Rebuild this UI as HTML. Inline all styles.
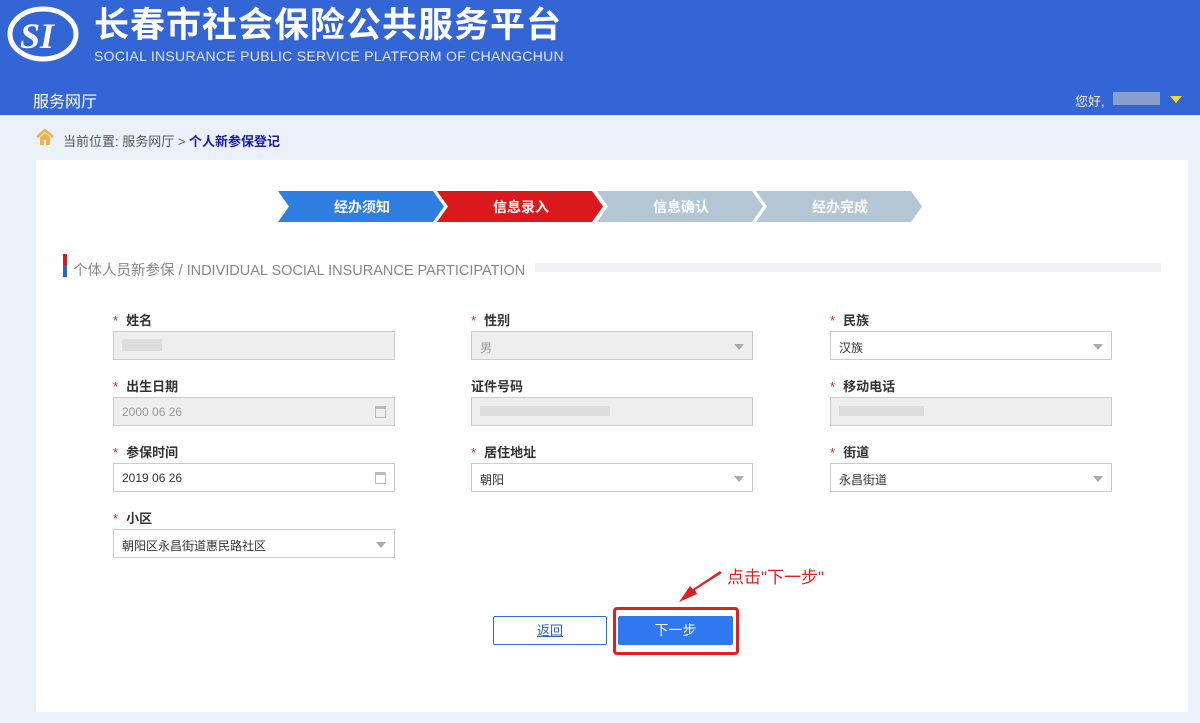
<!DOCTYPE html>
<html><head><meta charset="utf-8"><style>
*{margin:0;padding:0;box-sizing:border-box}
body{width:1200px;height:723px;background:#eaf1f9;font-family:"Liberation Sans","Noto Sans CJK SC",sans-serif;position:relative;overflow:hidden}
.abs{position:absolute}
.hdr{left:0;top:0;width:1200px;height:115px;background:#3366d4}
.lbl{position:absolute;font-size:13px;font-weight:bold;color:#333}
.lbl b{color:#e02020;margin-right:8px;font-weight:normal}
.inp{position:absolute;width:282px;height:29px;border:1px solid #ccc;background:#fff;font-size:12px;color:#333;padding:7px 8px}
.dis{background:#eeeeee;color:#999}
.arr{position:absolute;right:8px;top:12px;border-left:5px solid transparent;border-right:5px solid transparent;border-top:6px solid #aaa}
.cal{position:absolute;right:8px;top:8px;width:11px;height:12px;border:1px solid #bbb;border-top:3px solid #bbb}
</style></head><body>
<div class="abs hdr"></div>
<svg class="abs" style="left:6px;top:4px" width="74" height="60" viewBox="0 0 74 60"><ellipse cx="37" cy="30" rx="33" ry="25" fill="none" stroke="#fff" stroke-width="5"/><text x="14" y="44" font-size="36" font-weight="bold" font-style="italic" fill="#fff" font-family="Liberation Serif">SI</text></svg>
<div class="abs" style="left:94px;top:5px;font-size:35px;line-height:42px;color:#fff;letter-spacing:1px;font-weight:bold">长春市社会保险公共服务平台</div>
<div class="abs" style="left:94px;top:48px;font-size:14px;color:#dfe6f5;letter-spacing:0.3px">SOCIAL INSURANCE PUBLIC SERVICE PLATFORM OF CHANGCHUN</div>
<div class="abs" style="left:33px;top:88px;font-size:16px;color:#fff">服务网厅</div>
<div class="abs" style="left:1075px;top:91px;font-size:13px;color:#f3f0c0">您好,</div>
<div class="abs" style="left:1113px;top:92px;width:47px;height:13px;background:#8a9fd0"></div>
<div class="abs" style="left:1170px;top:96px;border-left:6px solid transparent;border-right:6px solid transparent;border-top:7px solid #f5d630"></div>
<svg class="abs" style="left:36px;top:129px" width="18" height="16" viewBox="0 0 18 16"><path d="M1 8L9 1l8 7" fill="none" stroke="#f0b24a" stroke-width="2.5"/><path d="M4 8v8h4v-5h2v5h4V8L9 4z" fill="#f0b24a"/></svg>
<div class="abs" style="left:63px;top:131px;font-size:13px;color:#555">当前位置: 服务网厅 &gt; <span style="color:#1a1aa8;font-weight:bold">个人新参保登记</span></div>
<div class="abs" style="left:36px;top:160px;width:1152px;height:552px;background:#fff"></div>
<svg class="abs" style="left:276px;top:190px" width="650" height="33">
<polygon points="2,1 157,1 168,16.5 157,32 2,32 13,16.5" fill="#2f7fe0"/>
<polygon points="161,1 316,1 327,16.5 316,32 161,32 172,16.5" fill="#d9191c"/>
<polygon points="321,1 476,1 487,16.5 476,32 321,32 332,16.5" fill="#b4c6d4"/>
<polygon points="480,1 635,1 646,16.5 635,32 480,32 491,16.5" fill="#b4c6d4"/>
<g font-size="14" font-weight="bold" fill="#fff" font-family="Liberation Sans,Noto Sans CJK SC,sans-serif" text-anchor="middle">
<text x="86" y="22">经办须知</text><text x="245" y="22">信息录入</text><text x="405" y="22">信息确认</text><text x="564" y="22">经办完成</text></g></svg>
<div class="abs" style="left:63px;top:254px;width:4px;height:11px;background:#d9191c"></div>
<div class="abs" style="left:63px;top:265px;width:4px;height:12px;background:#2f5fd0"></div>
<div class="abs" style="left:73px;top:259px;font-size:14.5px;color:#888">个体人员新参保 / INDIVIDUAL SOCIAL INSURANCE PARTICIPATION</div>
<div class="abs" style="left:535px;top:263px;width:626px;height:9px;background:#eef1f5"></div>

<div class="lbl" style="left:113px;top:310px"><b>*</b>姓名</div>
<div class="inp dis" style="left:113px;top:331px"><span style="display:inline-block;width:40px;height:12px;background:#ddd"></span></div>
<div class="lbl" style="left:471px;top:310px"><b>*</b>性别</div>
<div class="inp dis" style="left:471px;top:331px">男<i class="arr"></i></div>
<div class="lbl" style="left:830px;top:310px"><b>*</b>民族</div>
<div class="inp" style="left:830px;top:331px">汉族<i class="arr"></i></div>

<div class="lbl" style="left:113px;top:376px"><b>*</b>出生日期</div>
<div class="inp dis" style="left:113px;top:397px">2000 06 26<i class="cal"></i></div>
<div class="lbl" style="left:471px;top:376px">证件号码</div>
<div class="inp dis" style="left:471px;top:397px"><span style="display:inline-block;width:130px;height:10px;background:#ddd"></span></div>
<div class="lbl" style="left:830px;top:376px"><b>*</b>移动电话</div>
<div class="inp dis" style="left:830px;top:397px"><span style="display:inline-block;width:85px;height:10px;background:#ddd"></span></div>

<div class="lbl" style="left:113px;top:442px"><b>*</b>参保时间</div>
<div class="inp" style="left:113px;top:463px">2019 06 26<i class="cal"></i></div>
<div class="lbl" style="left:471px;top:442px"><b>*</b>居住地址</div>
<div class="inp" style="left:471px;top:463px">朝阳<i class="arr"></i></div>
<div class="lbl" style="left:830px;top:442px"><b>*</b>街道</div>
<div class="inp" style="left:830px;top:463px">永昌街道<i class="arr"></i></div>

<div class="lbl" style="left:113px;top:508px"><b>*</b>小区</div>
<div class="inp" style="left:113px;top:529px">朝阳区永昌街道惠民路社区<i class="arr"></i></div>

<div class="abs" style="left:493px;top:616px;width:114px;height:29px;border:1px solid #2f6fd0;border-radius:2px;font-size:13px;color:#2f5fb0;text-align:center;line-height:27px;text-decoration:underline">返回</div>
<div class="abs" style="left:613px;top:607px;width:126px;height:48px;border:3px solid #e02020;border-radius:4px"></div>
<div class="abs" style="left:618px;top:616px;width:115px;height:29px;background:#2f78f0;border-radius:2px;font-size:14px;color:#fff;text-align:center;line-height:29px">下一步</div>
<svg class="abs" style="left:675px;top:570px" width="50" height="36"><path d="M47 3L20 20l2 4L4 32l11-16 3 3L45 1z" fill="#e02020"/></svg>
<div class="abs" style="left:727px;top:563px;font-size:17px;color:#e02020">点击"下一步"</div>
</body></html>
